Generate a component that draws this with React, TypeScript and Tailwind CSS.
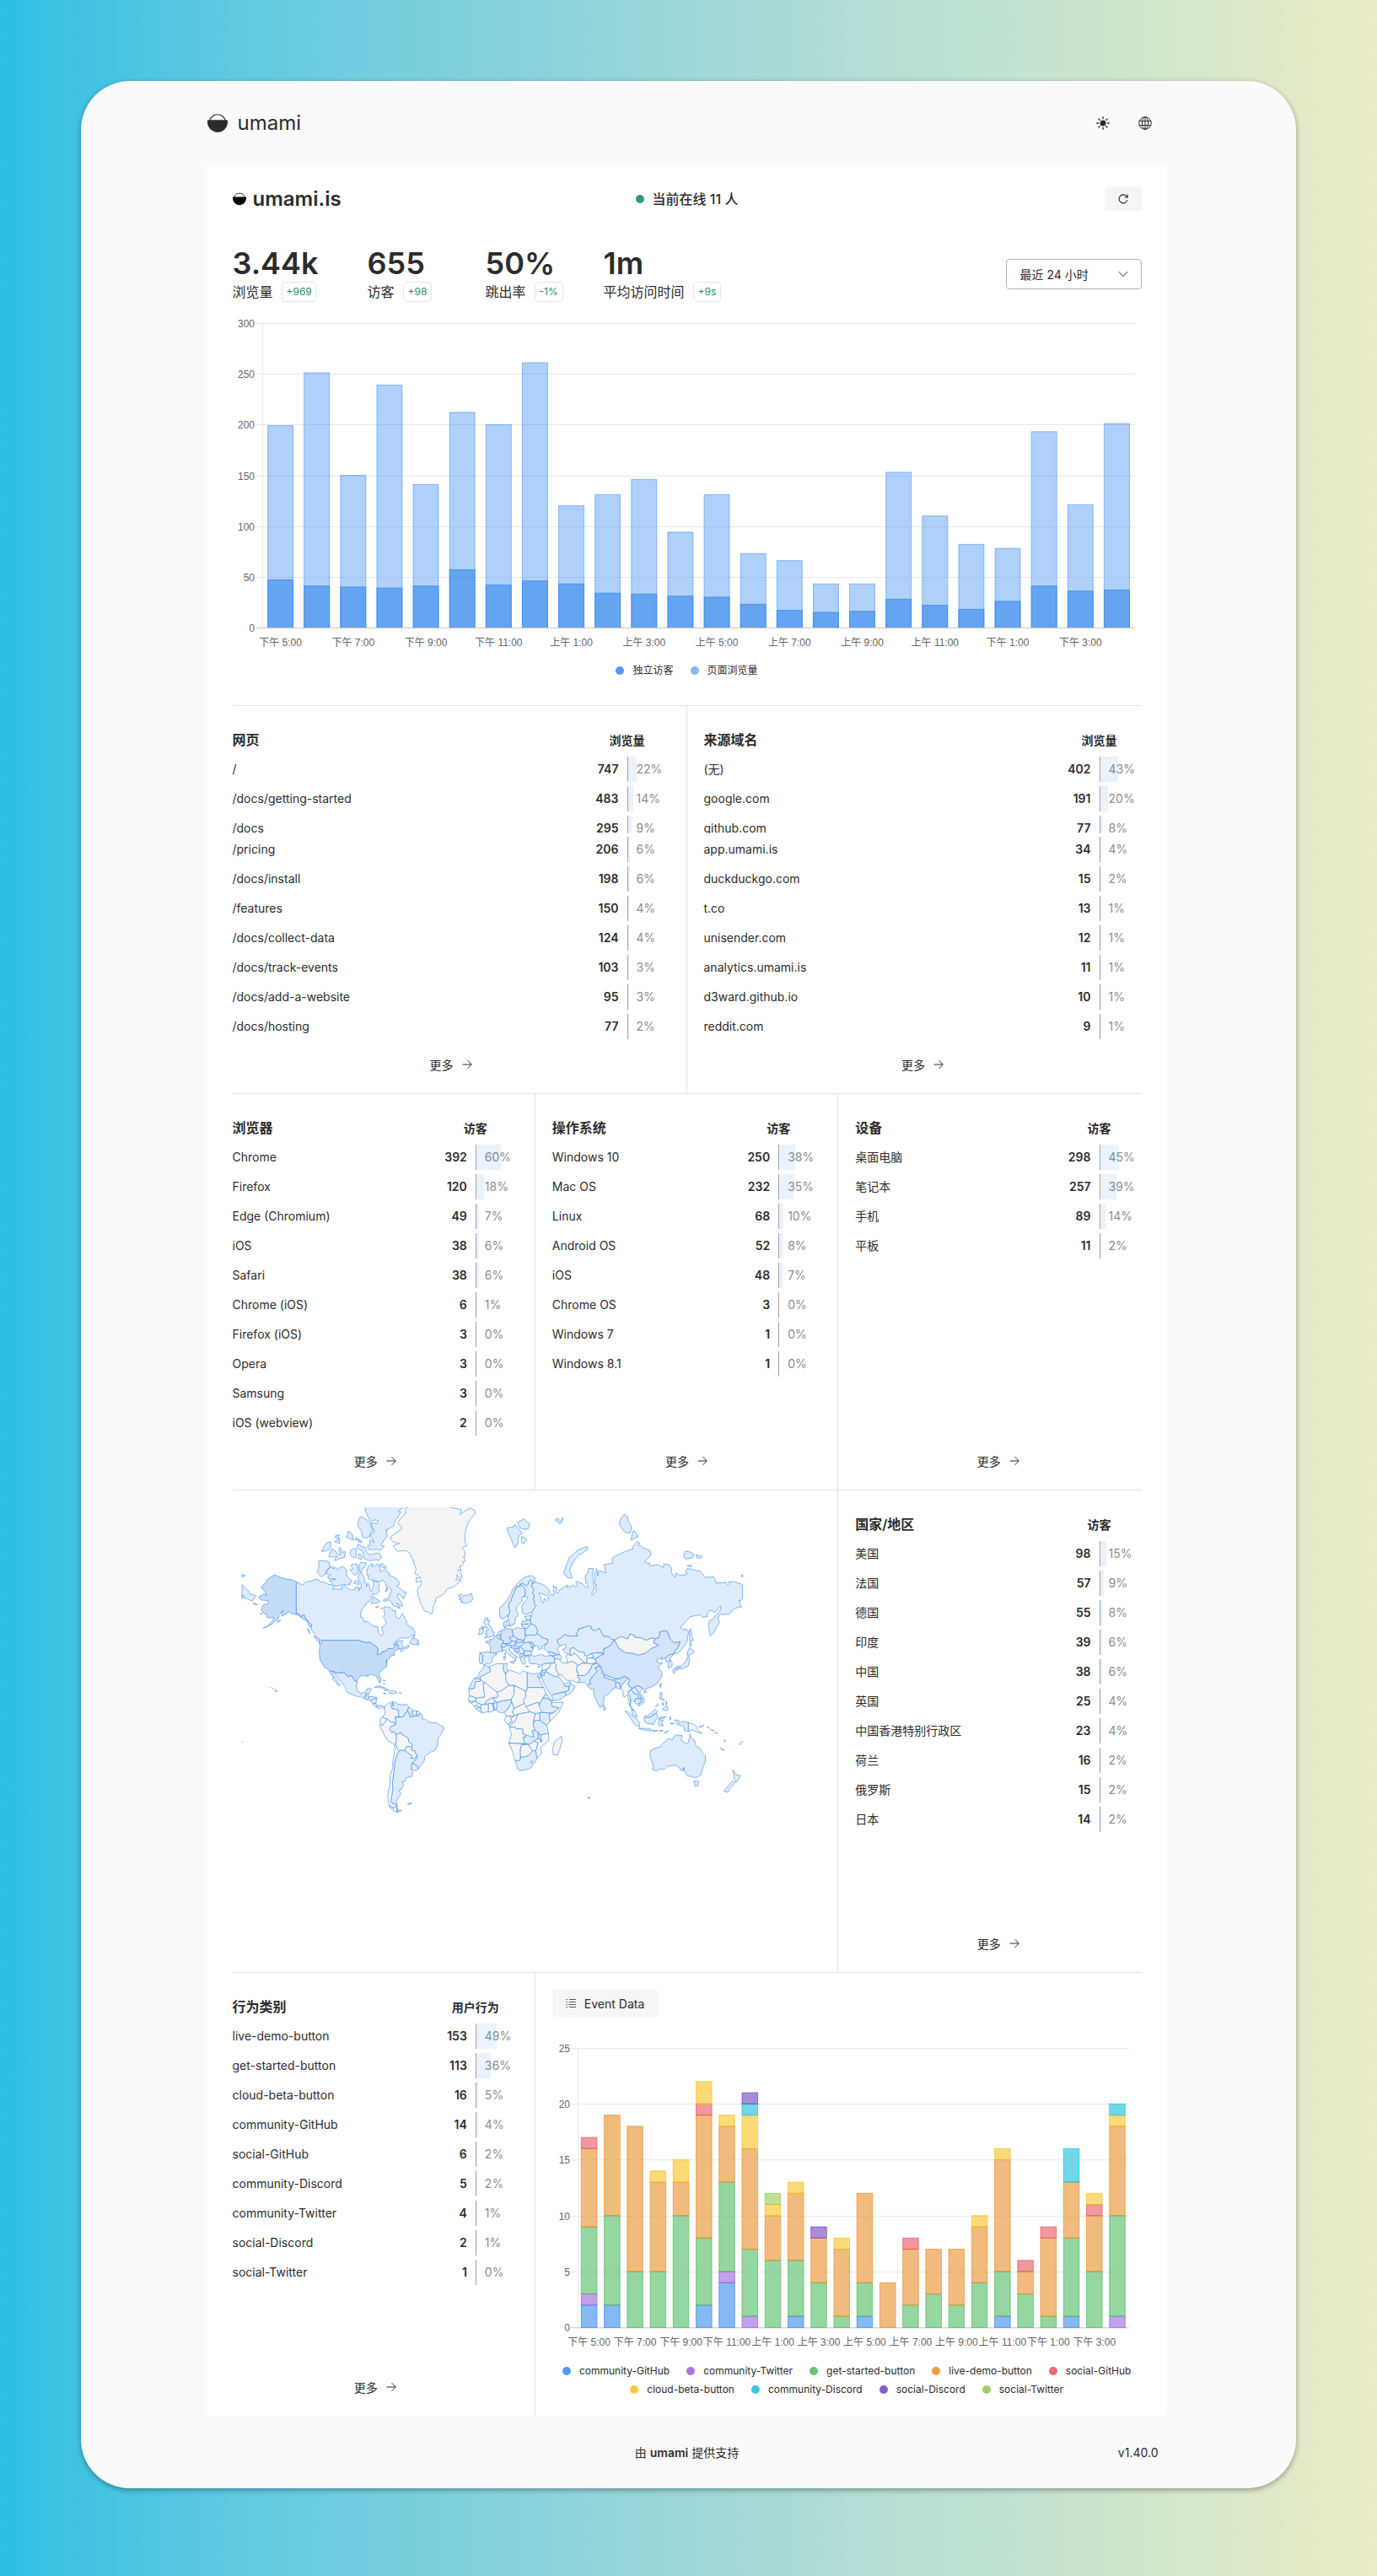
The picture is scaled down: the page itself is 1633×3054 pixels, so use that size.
import React from "react";

const INK = "#2c2c2c";

/* ---------- data ---------- */

type Row = [string, number, number];

const pages: Row[] = [
  ["/", 747, 22], ["/docs/getting-started", 483, 14], ["/docs", 295, 9], ["/pricing", 206, 6],
  ["/docs/install", 198, 6], ["/features", 150, 4], ["/docs/collect-data", 124, 4],
  ["/docs/track-events", 103, 3], ["/docs/add-a-website", 95, 3], ["/docs/hosting", 77, 2],
];
const referrers: Row[] = [
  ["(无)", 402, 43], ["google.com", 191, 20], ["github.com", 77, 8], ["app.umami.is", 34, 4],
  ["duckduckgo.com", 15, 2], ["t.co", 13, 1], ["unisender.com", 12, 1],
  ["analytics.umami.is", 11, 1], ["d3ward.github.io", 10, 1], ["reddit.com", 9, 1],
];
const browsers: Row[] = [
  ["Chrome", 392, 60], ["Firefox", 120, 18], ["Edge (Chromium)", 49, 7], ["iOS", 38, 6], ["Safari", 38, 6],
  ["Chrome (iOS)", 6, 1], ["Firefox (iOS)", 3, 0], ["Opera", 3, 0], ["Samsung", 3, 0], ["iOS (webview)", 2, 0],
];
const systems: Row[] = [
  ["Windows 10", 250, 38], ["Mac OS", 232, 35], ["Linux", 68, 10], ["Android OS", 52, 8], ["iOS", 48, 7],
  ["Chrome OS", 3, 0], ["Windows 7", 1, 0], ["Windows 8.1", 1, 0],
];
const devices: Row[] = [["桌面电脑", 298, 45], ["笔记本", 257, 39], ["手机", 89, 14], ["平板", 11, 2]];
const countries: Row[] = [
  ["美国", 98, 15], ["法国", 57, 9], ["德国", 55, 8], ["印度", 39, 6], ["中国", 38, 6], ["英国", 25, 4],
  ["中国香港特别行政区", 23, 4], ["荷兰", 16, 2], ["俄罗斯", 15, 2], ["日本", 14, 2],
];
const events: Row[] = [
  ["live-demo-button", 153, 49], ["get-started-button", 113, 36], ["cloud-beta-button", 16, 5],
  ["community-GitHub", 14, 4], ["social-GitHub", 6, 2], ["community-Discord", 5, 2],
  ["community-Twitter", 4, 1], ["social-Discord", 2, 1], ["social-Twitter", 1, 0],
];
const metrics: [string, string, string][] = [
  ["3.44k", "浏览量", "+969"], ["655", "访客", "+98"], ["50%", "跳出率", "-1%"], ["1m", "平均访问时间", "+9s"],
];

const hours = [
  "下午 5:00", "下午 7:00", "下午 9:00", "下午 11:00", "上午 1:00", "上午 3:00",
  "上午 5:00", "上午 7:00", "上午 9:00", "上午 11:00", "下午 1:00", "下午 3:00",
];
const views = [199, 251, 150, 239, 141, 212, 200, 261, 120, 131, 146, 94, 131, 73, 66, 43, 43, 153, 110, 82, 78, 193, 121, 201];
const visitors = [47, 41, 40, 39, 41, 57, 42, 46, 43, 34, 33, 31, 30, 23, 17, 15, 16, 28, 22, 18, 26, 41, 36, 37];

const series: [string, string][] = [
  ["community-GitHub", "#2680eb"], ["community-Twitter", "#9256d9"], ["get-started-button", "#44b556"],
  ["live-demo-button", "#e68619"], ["social-GitHub", "#e34850"], ["cloud-beta-button", "#f7bd12"],
  ["community-Discord", "#01bad7"], ["social-Discord", "#6734bc"], ["social-Twitter", "#89c541"],
];
// One entry per hour, counts in the order of `series`.
const eventBars = [
  [2, 1, 6, 7, 1], [2, 0, 8, 9], [0, 0, 5, 13], [0, 0, 5, 8, 0, 1], [0, 0, 10, 3, 0, 2], [2, 0, 6, 11, 1, 2],
  [4, 1, 8, 5, 0, 1], [0, 1, 6, 9, 0, 3, 1, 1], [0, 0, 6, 4, 0, 1, 0, 0, 1], [1, 0, 5, 6, 0, 1],
  [0, 0, 4, 4, 0, 0, 0, 1], [0, 0, 1, 6, 0, 1], [1, 0, 3, 8], [0, 0, 0, 4], [0, 0, 2, 5, 1], [0, 0, 3, 4],
  [0, 0, 2, 5], [0, 0, 4, 5, 0, 1], [1, 0, 4, 10, 0, 1], [0, 0, 3, 2, 1], [0, 0, 1, 7, 1],
  [1, 0, 7, 5, 0, 0, 3], [0, 0, 5, 5, 1, 1], [0, 1, 9, 8, 0, 1, 1],
];

/* ---------- world map, outlines as "lon,lat" lists ---------- */

const usa = [
  "-141,69.7 -141,60.3 -139,60 -137.5,59 -135.5,59.8 -134,58.2 -132,57 -130,55.9 -130.5,54.8 -132,55.5 -133.5,57.5 -136.5,58.3 -140,59.7 -144,60 -147,60.9 -148.3,60 -151.7,59.2 -151.5,60.7 -150,61.2 -153,60 -154,59.3 -153.3,58.9 -156,57.5 -158.5,56 -163,54.8 -164.8,54.5 -162,55.3 -158,57.5 -157,58.8 -159,58.5 -162,58.7 -162,59.9 -164,60 -165.5,61.1 -166,61.7 -164.8,63.1 -161,63.5 -161,64.5 -163.5,64.5 -166.5,64.7 -168,65.6 -164.5,66.5 -162,66.1 -163.7,67.1 -166.3,68.4 -163,69.5 -161.9,70.3 -156.6,71.4 -152.3,70.8 -148,70.4 -143.6,70.2",
  "-122.8,49 -95.2,49 -94.6,48.7 -91.6,48.1 -89.5,48 -88.4,48.3 -84.9,46.9 -84.6,46.5 -83.6,46.1 -83.6,45.8 -82.5,45.3 -82.1,43.6 -83.1,42 -82.4,41.7 -79,42.9 -79,43.5 -76.8,43.6 -76.5,44 -75,45 -71.5,45 -70.3,45.9 -69.2,47.4 -68.2,47.3 -67.8,47 -67.8,45.7 -67,44.8 -70.1,43.7 -70.8,42.5 -70,41.8 -72.3,41.3 -74,40.6 -74.2,39.5 -75.5,39 -76,37 -76.3,39 -76,36.5 -75.8,35.5 -78,33.9 -80.8,32 -81.4,30.7 -80,27 -80.4,25.2 -81.2,25.2 -82.7,27.7 -83.7,29.9 -85.1,29.6 -86.4,30.4 -89.6,30.2 -89.2,29.2 -91.6,29.6 -94,29.6 -97,28 -97.1,26 -99,26.4 -101,29.4 -102.5,29.8 -103.1,29 -104.5,29.6 -106.5,31.8 -108.2,31.8 -108.2,31.3 -111,31.3 -114.8,32.5 -117.1,32.5 -118.4,33.7 -120.6,34.6 -122,36.6 -124,39 -124.2,41 -124.5,42.8 -124,46 -124.6,48.3 -122.6,47.3",
  "-155.9,20.2 -154.8,19.5 -155.7,19 -156,19.8", "-156.6,20.9 -156,20.7 -156.4,20.6", "-158.2,21.6 -157.7,21.3 -158.1,21.3", "-159.7,22.2 -159.3,22 -159.6,21.9",
  "-154.7,57.6 -152.2,57.6 -154,56.7", "-166.5,60.3 -165.6,59.9 -167,59.9", "-171.7,63.7 -168.8,63.2 -171.5,63.3",
];

const strong = [
  // France, Germany
  "2.5,51.1 4.3,49.9 6.2,49.5 8.1,49 7.5,47.6 6,46.3 6.8,45.7 7.4,43.7 4.6,43.4 3.1,43.1 3,42.5 -1.5,43 -1.4,44 -1.2,46 -2.9,47.6 -4.5,48 -4.6,48.7 -1.6,48.6 -1.9,49.8 -1,49.3 1.3,50.1 1.6,50.9",
  "9.9,55 11,54 12.5,54.5 14.1,53.8 14.7,52 15,51.1 12.2,50.3 13.6,48.8 13,47.6 10.4,47.5 7.5,47.6 8.1,49 6.2,49.5 6,51.8 7.1,53.7 8.8,54 8.6,54.9",
  // India, China
  "77.8,35.5 74,34.5 75.3,32.3 74,31 71,27.9 70,26 71,24.4 68.2,23.7 70.5,20.9 72.6,21.5 73,18 74.8,13 77.5,8 80,10.3 80.3,15.9 82.2,16.6 87,20.7 87,21.5 89,21.8 88.6,24 88.5,26 89.8,25.3 92,25 91.2,23.5 92.3,22 93.2,24 94.6,25 97.3,28 95,29.3 91.7,27.8 88.8,27.5 88,26.4 80,28.8 81,30 79,31 79,32.5",
  "87.8,49.2 91,45.2 96,42.8 101,42.6 105,41.6 110,42.6 112,43.7 114,45 119.7,46.7 116,47.8 116.7,49.9 119.3,50.1 120.7,52 120.2,52.8 123.6,53.5 125.9,53 127.7,49.8 131,47.8 135,48.5 133.1,45.1 131.3,44.1 130.7,42.4 128,42 126.5,41.5 124.3,40 121.5,39 122,40.5 118,39 119,37.5 122.5,37.2 119.3,35 121.9,31.7 121.8,29 119.6,25.7 117,23.6 114,22.2 110.5,21.2 110,20.4 108,21.5 105,23.3 102,22.4 101,21.4 97.6,24 98.7,27.5 97.3,28.3 95,29.3 91.7,27.8 88,27.9 81,30.2 79,32.5 77.8,35.5 75,37.4 73.7,39.5 76,40.4 80.3,42.3 80,44.9 82.5,45.5 85.5,47",
  "110,20 111,19.5 109.5,18.2 108.7,19.3",
];

const light = [
  // Canada
  "-141,69.7 -136.5,68.9 -134.4,69.6 -131.4,69.9 -129,70 -127.5,70.4 -124.4,70.1 -123,69.6 -121.5,69.8 -117.6,69 -115.2,69 -113.9,68.4 -115,67.9 -110.8,67.8 -107.8,67.9 -108.8,68.3 -106.2,68.8 -104.3,68 -101.5,67.6 -98.4,67.8 -98.5,68.4 -96.1,68.2 -96,67.3 -95.5,68.1 -94.7,68.1 -94.2,69.1 -96.4,70.2 -96.4,71.2 -95.2,71.9 -93.9,71.8 -92.9,71.3 -91.5,70.2 -92.4,69.7 -90.5,69.5 -90.5,68.5 -89.2,69.3 -88,68.6 -88.3,67.9 -87.3,67.2 -86.3,67.9 -85.6,68.8 -85.5,69.9 -82.6,69.7 -81.3,69.2 -81.2,68.7 -82,68.1 -81.3,67.6 -81.4,67.1 -83.3,66.4 -84.7,66.3 -85.8,66.6 -86.1,66.1 -87,65.2 -87.3,64.8 -88.5,64.1 -89.9,64 -90.7,63.6 -90.8,63 -91.9,62.8 -93.2,62 -94.2,60.9 -94.6,60.1 -94.7,58.9 -93.2,58.8 -92.3,57.1 -90.9,57.3 -89,56.9 -88,56.5 -87.3,56 -85,55.3 -82.3,55.1 -82.4,54.3 -82.1,53.3 -81.4,52.2 -79.9,51.2 -79.1,51.5 -78.6,52.6 -79.1,54.1 -79.8,54.7 -78.2,55.1 -77.1,55.8 -76.5,56.5 -76.6,57.2 -77.3,58.1 -78.5,58.8 -77.3,59.9 -77.8,60.8 -78.1,62.3 -77.4,62.6 -75.7,62.3 -74.7,62.2 -73.8,62.4 -72.9,62.1 -71.7,61.5 -71.4,61.1 -69.6,61.1 -69.6,60.2 -69.3,59 -68.4,58.8 -67.6,58.2 -66.2,58.8 -65.2,59.9 -64.6,60.3 -63.8,59.4 -62.5,58.2 -61.4,57 -61.8,56.3 -60.5,55.8 -59.6,55.2 -58,54.9 -57.3,54.6 -56.9,53.8 -56.2,53.6 -55.8,53.3 -55.7,52.1 -57.1,51.4 -58.8,51.1 -60,50.2 -61.7,50.1 -66.4,50.2 -67.2,49.5 -68.5,49.1 -70,47.7 -71.1,46.8 -69,48.3 -65.1,49.2 -64.2,48.7 -65.1,48.1 -64.5,46.2 -63.2,45.7 -61.5,45.9 -60.5,47 -59.8,45.9 -61,45.3 -63.3,44.7 -65.4,43.5 -66.1,43.6 -66.2,44.5 -64.4,45.3 -67,45.1 -67.8,45.7 -67.8,47 -68.2,47.3 -69.2,47.4 -70.3,45.9 -71.5,45 -75,45 -76.5,44 -76.8,43.6 -79,43.5 -79,42.9 -82.4,41.7 -83.1,42 -82.1,43.6 -82.5,45.3 -83.6,45.8 -83.6,46.1 -84.6,46.5 -84.9,46.9 -88.4,48.3 -89.5,48 -91.6,48.1 -94.6,48.7 -95.2,49 -122.8,49 -125,50 -127.4,50.8 -127.9,52.3 -129.1,52.8 -130.5,54.3 -130,55.9 -132,57 -134,58.2 -135.5,59.8 -137.5,59 -139,60 -141,60.3",
  "-56.1,50.7 -56.8,49.8 -55.5,49.9 -53.5,49.2 -53.8,48.5 -53.1,48.7 -52.6,47.5 -53.1,46.7 -54.2,46.8 -54.2,47.8 -55.4,46.9 -56,47 -59.3,47.6 -59.4,47.9 -58.4,49.1 -57.4,50.7 -55.9,51.6",
  "-123.5,48.5 -125.7,48.8 -128.4,50.8 -126,50.4", "-133.2,54.2 -131.2,52.2 -132,54",
  "-61.9,66.9 -63.9,65 -66.7,66.4 -68,66.3 -68.1,65.7 -64.9,63.4 -64.7,62.6 -66.3,62.9 -68.8,63.7 -66.2,61.9 -71,62.9 -72.2,63.4 -71.9,63.7 -74.8,64.7 -77.7,64.2 -78.6,64.6 -73.9,65.5 -74.3,65.8 -73.9,66.3 -72.7,67.3 -72.9,67.7 -76.9,68.9 -76.2,69.1 -79,70.2 -79.5,69.9 -81.3,69.7 -84.9,70 -88.7,70.4 -89.5,70.8 -88.5,71.2 -89.9,71.2 -90.2,72.2 -89.4,73.1 -88.4,73.5 -85.8,73.8 -86.6,73.2 -84.8,73.3 -82.3,73.8 -80.6,72.7 -80.7,72.1 -78.8,72.4 -77.8,72.7 -74.2,71.8 -74.1,71.3 -71.2,70.9 -68.8,70.5 -67.9,70.1 -66.5,69.2 -68.8,68.7 -63,67",
  "-80.9,73.3 -76.3,72.8 -76.3,73.1 -78.1,73.7 -80.3,73.8",
  "-114.2,73.1 -114.7,72.7 -112.4,73 -111.1,72.5 -109.9,73 -108.4,73.1 -107.5,73.2 -106.5,73 -105.4,72.7 -104.5,71 -101,70 -101.1,69.6 -102.7,69.5 -102.1,69.1 -104.2,68.9 -107.1,69.1 -109,68.8 -113.3,68.5 -113.9,69 -115.2,69.3 -117.3,70 -112.4,70.4 -117.9,70.5 -118.4,70.9 -116.1,71.3 -119.4,71.6 -118.6,72.3 -117.9,72.7 -115.2,73.3",
  "-120.5,71.4 -123.1,70.9 -125.9,71.9 -124.8,73 -124.9,74.3 -121.5,74.4 -117.6,74.2 -116.5,73 -119.2,72.5",
  "-100.4,73.8 -99.2,73.6 -97.4,73.8 -96.5,72.6 -96.7,71.7 -98.4,71.3 -99.3,71.4 -102.5,72.5 -100.4,72.7 -101.5,73.4",
  "-93.2,72.8 -94.3,72 -95.4,72.1 -96,73.4 -94.5,74.1 -90.5,73.9 -92,73",
  "-96.7,77.2 -94.7,77.1 -93.6,76.8 -91.6,76.8 -90.7,76.4 -91,76.1 -89.8,75.8 -89.2,75.6 -86.4,75.5 -84.8,75.7 -82.8,75.8 -81.1,75.7 -80.1,75.3 -79.8,74.9 -80.5,74.7 -81.9,74.4 -83.2,74.6 -86.1,74.4 -88.2,74.4 -89.8,74.5 -92.4,74.8 -92.8,75.4 -92.9,75.9 -93.9,76.3 -96,76.4 -97.1,76.8",
  "-94.9,75.6 -93.6,75 -94.2,74.6 -96.8,74.9 -95.6,75.7", "-98.5,76.7 -97.7,76.5 -97.7,75.7 -98.2,75 -99.8,74.9 -102.5,75.6 -101.5,76.3",
  "-108.2,76.2 -107.8,75.8 -106.9,76 -105.9,76 -105.7,75.5 -106.3,75 -109.7,74.8 -112.2,74.4 -113.7,74.4 -111.8,75.2 -116.3,75 -117.7,75.2 -115.4,76.5 -112.6,76.1 -110.8,75.5 -109.1,75.5 -110.5,76.4 -109.6,76.8",
  "-116.2,77.6 -116.3,76.9 -117.1,76.5 -119.9,76.1 -122.9,76.1 -121.2,76.9 -119.1,77.5",
  "-87,79.7 -85.8,79.3 -87.2,79 -89,78.3 -90.8,78.2 -92.9,78.3 -94,78.8 -93.9,79.1 -96.1,79.7 -96.7,80.2 -95.3,80.9 -94.3,81 -91.1,80.7 -87.8,80.3",
  "-68.5,83.1 -65.8,83 -63.7,82.9 -61.9,82.6 -64.3,81.9 -66.8,81.7 -67.7,81.5 -65.5,81.5 -67.8,80.9 -69.5,80.6 -71.2,79.8 -73.2,79.6 -76.9,79.3 -75.5,79.2 -76.2,79 -75.4,78.5 -76.3,78.2 -77.9,77.9 -79.8,77.2 -79.6,77 -77.9,77 -77.9,76.8 -80.6,76.2 -83.2,76.5 -86.1,76.3 -89.5,76.5 -89.6,77 -87.8,77.2 -88.3,77.9 -87.7,78 -85,77.5 -86.3,78.2 -88,78.4 -87.2,78.8 -85.4,79 -85.1,79.3 -86.5,79.7 -86.9,80.3 -84.2,80.2 -83.4,80.1 -81.8,80.5 -84.1,80.6 -87.6,80.5 -89.4,80.9 -90.2,81.3 -91.4,81.6 -91.6,81.9 -90.1,82.1 -86,82.7",
  "-85.2,65.7 -84,65.2 -81.6,64.5 -80.8,64.1 -83.1,63.7 -85.5,63.7 -87.2,63.5 -86,64.6",
  "-104.2,78.7 -103.5,79.2 -100.8,78.8 -99.7,77.9 -101.3,78 -105.2,78.4", "-95.6,69.1 -97.6,69.1 -99.8,69.4 -98.2,70.1 -96.6,69.7",
  "-110,78 -110.9,78.4 -109.7,78.6 -112.5,78.6 -112.9,78.3", "-109.9,78 -113.5,77.7 -110,77.4", "-93.8,77.5 -96.4,77.6 -96.2,77.9 -94,77.8", "-98,78.3 -95.5,77.9 -98.5,77.9",
  "-75.9,68.3 -77,67.1 -75.1,67.5", "-82,62.8 -83.9,62.2 -81.9,62.5", "-79.3,62.3 -79.9,62 -79.7,61.7",
  // Iceland, Scandinavia, Svalbard
  "-14.5,66.5 -14.7,65.8 -13.6,65.1 -14.9,64.4 -17.8,63.7 -18.7,63.5 -22.8,64 -21.8,64.4 -24,64.9 -22.2,65.1 -22.2,65.4 -24.3,65.6 -23.7,66.3 -22.1,66.4 -20.6,65.7 -19.1,66.3 -17.8,66 -16.2,66.5",
  "5,62 5.7,58.6 7,58.1 8.4,58.3 10.4,59.5 11,59 12.3,60.1 12.6,61.3 12,61.8 11.9,63.1 12.6,64.1 13.9,64.4 13.6,64.8 15.1,66.2 16.1,67.3 16.8,68 17.7,68 17.9,68.6 20,68.4 20,69.1 20.6,69.1 21.2,69.4 23.7,68.9 24.7,68.6 25.7,69.1 26.2,69.8 28,70.1 29,69.8 28.6,69.1 31.1,69.6 30,70.2 31.3,70.5 28.2,71.2 24.5,71 21.4,70.3 19.2,69.8 16.4,68.6 14.8,67.8 12.4,65.9 10.5,64.5 8.6,63.5",
  "22.2,65.7 21.2,65 21.4,64.4 19.8,63.6 17.8,62.7 17.1,61.3 17.8,60.6 18.8,60.1 17.9,59 16.8,58.7 16.4,57 15.9,56.1 14.7,56.2 14.1,55.4 12.9,55.4 12.6,56.3 11.8,57.4 11,58.9 12.3,60.1 12.6,61.3 12,61.8 11.9,63.1 12.6,64.1 13.9,64.4 13.6,64.8 15.1,66.2 16.1,67.3 16.8,68 17.7,68 17.9,68.6 20,68.4 20,69.1 20.6,69.1 23.5,67.9 23.9,66",
  "28.6,69.1 28.4,68.4 30,67.7 29,66.9 30.2,65.8 29.5,64.9 30.4,64.2 30,63.6 31.5,62.9 28.1,60.5 22.9,59.8 21.3,60.7 21.5,61.7 21.1,62.6 22.4,63.8 25.4,65.1 25.3,65.5 22.2,65.7 23.9,66 23.5,67.9 20.6,69.1 21.2,69.4 23.7,68.9 24.7,68.6 25.7,69.1 26.2,69.8 28,70.1 29,69.8",
  "10.4,79.6 13,79.7 15,79.7 16,80 17,79.9 18,79.7 21.5,78.9 19,78.5 18.5,77.5 17,76.8 15.9,76.8 14.5,77.5 13.8,78 11.5,78.9", "18,80.3 20,80.5 22.9,80.7 27,80.1 25.9,79.5 23,79.4 20.1,79.6", "20.9,78.4 22.9,78.3 24.7,77.9 22.5,77.3 21,77.7",
  "45,80.6 47,80.8 49,80.5 51,80.9 50,80.3 48.5,80.1 47,80.4",
  "8.1,55.5 8.3,57 10.6,57.7 10.9,56.4 9.6,54.8 8.5,55", "12,56 12.6,55.5 11,55.4",
  // British Isles, Iberia
  "-3,58.6 -4.1,57.6 -1.9,57.7 -3.1,56 -2,55.8 -.4,54.5 .5,52.9 1.7,52.7 1,51.8 1.4,51.3 -2.5,50.5 -5.8,50.2 -3.4,51.4 -5.3,52 -4.2,52.3 -4.6,53.5 -3.1,53.4 -2.9,54 -3.6,54.6 -5,54.8 -4.7,55.6 -5.6,56.3 -6.1,56.8 -5,58.6",
  "-5.7,54.6 -7.6,54.1 -7.3,55.1 -6,55.2", "-6.2,53.9 -6,53.2 -6.8,52.3 -10,51.6 -9,53 -9.7,53.9 -7.3,55.1 -7.6,54.1",
  "-9,43 -1.9,43.4 3,42.5 3,41.9 .8,41 -.3,39.3 .1,38.7 -.7,37.6 -2.1,36.7 -4.4,36.7 -5.9,36 -7.5,37.1 -7,38 -7,39.7 -6.9,41 -6.4,41.4 -8.3,42.3 -9,41.9",
  "-9,41.9 -8.3,42.3 -6.4,41.4 -6.9,41 -7,39.7 -7,38 -7.5,37.1 -8.9,36.9 -9.5,38.7",
  // Central Europe, Italy, Balkans
  "3.5,51.4 4.7,53.1 6.9,53.5 7,52.2 6,51.8 6,50.9 5,51.5", "2.5,51.1 3.5,51.4 5,51.5 6,50.9 6.2,49.5 4.3,49.9",
  "6,46.3 7.5,47.6 9.6,47.4 10.4,46.8 9,45.9 6.8,45.9", "9.6,47.4 13,47.6 13.6,48.8 17,48.6 16.3,46.9 13.8,46.5 10.4,46.8",
  "7.4,43.7 6.8,45.7 9,45.9 10.4,46.8 13.8,46.5 13.6,45.6 12.3,45.2 12.6,44 14,42.7 16,41.9 18.4,40.3 16.9,40.5 16.5,39.8 17.1,39 15.8,38 16,39.5 15.2,40.1 12.2,41.8 10.3,43 8.8,44.4",
  "12.5,38 15.5,38.2 15.2,36.8", "8.3,40.9 9.6,41 9.2,39.2 8.4,39", "9.5,43 9.3,41.5 8.7,42",
  "14.1,53.8 18,54.8 19.7,54.4 22.8,54.4 23.8,53 23.5,51.5 24,50.6 22.6,49.1 18.9,49.5 15,51.1 14.7,52", "12.2,50.3 15,51.1 18.9,49.5 17,48.6 13.6,48.8",
  "17,48.6 18.9,49.5 22.6,49.1 22.1,48.4 18,47.8", "16.3,46.9 17,48 18,47.8 22.1,48.4 22.7,47.9 20.3,46.1 18.4,45.8 16.6,46.5",
  "22.7,47.9 26.6,48.2 28.2,46.9 28.2,45.5 29.6,45 28.6,43.7 22.9,43.9 21.4,45 20.3,46.1", "22.9,43.9 28.6,43.7 28,42 26.3,41.6 23,41.3",
  "20.3,46.1 22.9,43.9 22.4,42.3 20.5,42.2 19.2,43.5 19,45", "13.6,45.5 16.6,46.5 19,45.8 19,45 15.8,45.2 18.4,42.4 15.9,43.6 14.9,45", "15.8,45.2 19,44.9 19.2,43.5 18.6,42.7",
  "19.4,42 20.5,42.2 22.4,42.3 23,41.3 21,40.9 20,39.7", "20,39.7 21,40.9 23,41.3 26.3,41.6 26,40.9 23,40.3 22.8,39.5 24,38 23,36.5 21.5,36.9", "23.6,35.5 26.2,35.2 24.7,34.9", "32.4,35 34.5,35.6 33.6,34.8",
  "24,50.6 23.9,51.6 30.5,51.5 32,52.1 34.3,51.5 35,50.7 38,49.9 40,49.6 39.7,47.9 38.2,47.1 35,46.3 36.3,45.4 33.6,44.4 32.5,45.4 33.4,46 31,46.6 29.6,45.2 28.2,45.5 30,46.4 29,48 26.6,48.2 22.7,47.9 22.6,49.1", "26.6,48.2 29,48 30,46.4 28.2,45.5 28.2,46.9",
  "23.5,51.5 23.8,53 23.5,53.9 26.6,55.2 28.2,56.2 30.9,55.6 32.7,53.4 31.8,52.1 30.5,51.5", "21.1,55.2 21,56 25,56.3 26.6,55.2 23.5,53.9 22.7,54.9", "21,56 21.6,57.4 24.4,57.2 24.4,58 27.3,57.5 28.2,56.2 25,56.3", "24.4,58 23.4,59.2 28,59.5 27.3,57.5",
  // Russia
  "28,59.5 29,60 28.1,60.5 31.5,62.9 30,63.6 30.4,64.2 29.5,64.9 30.2,65.8 29,66.9 30,67.7 28.4,68.4 28.6,69.1 31.1,69.6 33.8,69.3 36.5,69.1 40.3,67.9 41.1,67.5 41.1,66.8 40,66.3 38.4,66 33.9,66.8 33.2,66.6 34.8,65.9 34.9,64.4 36.2,64.1 37,63.8 37.2,65.1 39.6,64.5 40.4,64.8 39.8,65.5 42.1,66.5 44,66.1 44.5,66.8 43.7,67.4 44.2,68 43.5,68.6 46.3,68.3 46.8,67.7 45.6,67 46.3,66.7 47.9,66.9 48.1,67.5 50.2,68 53.7,68.9 54.5,68.8 53.5,68.2 58.8,68.9 59.9,68.3 61.1,68.9 60,69.5 60.6,69.8 64.9,69.2 68.5,68.1 69.2,68.6 68.2,69.1 68.1,69.4 66.9,69.5 67.3,69.9 66.7,71 68.5,71.9 69.2,72.8 72.6,72.8 72.8,72.2 71.8,71.4 72.8,70.4 72.6,69 73.7,68.4 71.3,66.3 72.4,66.2 74.5,67.3 74.9,68 74.4,68.3 74.9,69 73.8,69.1 73.6,69.6 74.4,70.6 73.1,71.4 74.9,72.1 74.7,72.8 75.7,72.3 75.3,71.3 76.4,71.2 75.9,71.9 77.6,72.3 81.5,71.8 80.5,73.6 86.8,73.9 86,74.5 87.2,75.1 92.9,75.8 98.9,76.4 100.8,76.4 101,76.9 104.4,77.7 106.1,77.4 104.7,77.1 107,77 108.2,76.7 113.3,76.2 114.1,75.8 113.9,75.3 109.4,74.2 112.1,73.8 113,74 113.5,73.3 118.8,73.6 123.2,73 123.3,73.7 127,73.6 128.6,73 129,72.4 128.5,72 131.3,70.8 132.3,71.8 133.9,71.4 137.5,71.3 139.9,71.5 139.1,72.4 140.5,72.8 149.5,72.2 153,70.8 159,70.9 159.8,70.5 160.9,69.4 167.8,69.6 169.6,68.7 170.8,69 170,69.7 173.6,69.8 180,69 180,65 178.7,64.5 177.4,64.6 179.2,62.3 177.4,62.5 173.7,61.7 170.3,59.9 166.3,59.8 163.5,59.9 162,58.2 163.2,57.6 163,56.2 161.7,55.3 160,53.2 158.2,51.9 156.8,51 155.4,55.4 155.9,56.8 156.8,57.8 158.4,58.1 161.9,60.3 163.7,61.1 164.5,62.6 163.3,62.5 160.1,60.5 156.7,61.4 154.2,59.8 155,59.1 151.3,58.8 149.8,59.7 142.2,59 135.1,54.7 138.2,53.8 138.8,54.3 141.3,53.1 140.6,51.2 140,48.4 138.6,47 135.5,44 133.5,42.8 130.8,42.2 131.3,44.1 133.1,45.1 135,48.5 131,47.8 127.7,49.8 126.9,51.4 125.9,53 123.6,53.5 120.2,52.8 120.7,52 119.3,50.1 116.7,49.9 114.4,50.2 110.7,49.1 106.9,50.3 102.3,50.5 102.1,51.3 98.9,52 97.3,49.7 94.1,50.5 92.2,50.8 87.8,49.3 85.5,49.7 83.9,50.9 80,50.9 77.8,53.3 76.9,54.5 74.4,53.5 73.4,53.5 71.2,54.1 70.9,55.2 69,55.4 61.7,54 61.7,53 60,52 61.6,51.3 59.9,50.8 58.4,51.1 56.8,51 54.5,51 52.3,51.7 48.6,49.9 46.8,49.4 47.3,47.7 49.1,46.4 47.6,45.6 46.7,44.6 48.6,41.8 46.4,41.9 45.5,42.5 42.4,43.2 40,43.4 37,45 37.7,46.6 39.1,47.3 38.2,47.1 39.7,47.9 40,49.6 38,49.9 35,50.7 34.3,51.5 32,52.1 31.8,52.1 32.7,53.4 30.9,55.6 28.2,56.2 27.3,57.5",
  "57.5,70.7 56,70.6 53.7,70.8 53.4,71.2 51.6,71.5 51.5,72 55.6,75.1 58.5,75.6 61.2,76.3 68.2,76.9 68.9,76.5 64.6,75.7 61.6,75.3 58.5,74.3 55.4,72.4",
  "143.6,50.7 144.7,49 143.2,49.3 142.6,47.9 143.5,46.8 142.1,46 141.9,48.9 141.7,53.3 142.7,54.4",
  "95,81.2 97,81 98,80.4 100,79.8 99.5,79 97,78.9 95,79.1 92.5,79.7 91.3,80.2 93,80.9", "101.3,79.2 103,79.1 105,78.4 102.5,78.2 99.5,77.9",
  "138.8,76.1 141,76.1 145,75.6 144,74.9 139,74.7 137.5,75.2", "146.4,75.5 150.7,75.2 149.5,74.8 147,75", "140,73.4 143.6,73.4 142,73.2",
  "178.7,71.1 180,71.5 180,70.9", "-180,71.5 -177.6,71.2 -178.7,70.9 -180,70.9", "-180,69 -175,67.2 -174,66.4 -169.9,66 -172.5,64.4 -173,64.3 -176,65 -178.4,65.4 -178.7,66.1 -179.9,65.9 -179.4,65.4 -180,65",
  // Central and Western Asia
  "87.4,49.2 85.5,49.7 83.9,50.9 80,50.9 77.8,53.3 76.9,54.5 74.4,53.5 73.4,53.5 71.2,54.1 70.9,55.2 69,55.4 61.7,54 61.7,53 60,52 61.6,51.3 59.9,50.8 58.4,51.1 56.8,51 54.5,51 52.3,51.7 48.6,49.9 46.8,49.4 47.3,47.7 49.1,46.4 51,47 53,46.8 53,45.3 50.3,44.6 52.5,42.8 54.8,42 56,41.3 56,45 58.5,45.5 62,43.5 66,43 66.7,41.2 68,41 71,42.3 75,43 79,42.9 80.3,42.3 80,44.9 82.5,45.5 85.5,47",
  "71,42.3 75,43 80.3,42.3 76,40.4 73.7,39.5 69.5,39.5 73,40.8",
  "61.5,25.1 63.2,27.2 61,29.8 66.4,29.9 69,31.5 71,34 71.5,36 75,37.4 77,35.5 74,34.5 75.3,32.3 74,31 71,27.9 70,26 71,24.4 68,23.7 66.5,25.4",
  "88.5,26 89.8,25.3 92,25 92.3,21 89,21.8 88.6,24", "80,9.8 81.8,7.5 80.5,6 79.7,8",
  "26.2,40.3 28,42 29,41.2 31,41.1 35,42 38.3,41 41.5,41.5 43.5,41 44.8,39.7 44.8,37.2 42.3,37.2 36.7,36.8 36,36 34,36.3 30.6,36.8 27.3,36.8 26.3,38.3",
  "40,43.4 42.4,43.2 46.4,41.9 45,41.3 41.5,41.5", "45,41.3 46.4,41.9 48.6,41.8 50,40.4 48.9,38.4 46.5,38.8 44.8,39.7 43.5,41",
  "35.5,32.7 38.8,33.4 39,32 37,31.5 37.5,30 35,29.4", "34.3,31.2 35.7,33.2 35,29.4",
  "35,29.4 37.5,30 37,31.5 39,32 44.7,29.2 46.5,29.1 48.4,28.5 50.2,26.5 51.5,24.4 52,23 55.2,22.7 55,20 52,19 48,18.2 44,17.4 42.8,16.4 39,21.2 37,25",
  "42.8,16.4 44,17.4 48,18.2 52,19 53.1,16.6 49,14 43.5,12.7", "55,20 55.2,22.7 56,24.8 59.8,22.5 57.7,19.5 55.2,17.4 53.1,16.6 52,19", "51.5,24.4 56.3,26 56,24.8 55.2,22.7 52,23",
  // South-East and East Asia
  "100,20.4 97.4,18.5 98.9,16 99.2,13 98.5,10 100.1,6.5 102,6.2 100.3,8.3 99.2,10 100,13.4 102.5,12.2 103,14.2 105.5,14.5 104.5,17.4 102,18", "100,20.4 102,22.4 104,20.5 107,16 107,14.5 105.5,14.5 104.5,17.4 102,18",
  "102,22.4 105,23.3 108,21.5 106,19 109,15 109.3,12 105,8.8 105,10.5 107.5,12.4 107.5,14.5 104,20.5", "102.5,12.2 103,14.2 107.5,14.2 106,11 103.5,10.6",
  "121.5,25.2 120.8,22 120.1,23.5", "130.7,42.4 128,42 124.3,40 125,38 128.4,38.6 127.5,39.8", "126.7,37.8 128.4,38.6 129.4,37 129.2,35.2 126.5,34.4 126.5,36.7",
  "141.9,39.2 140.9,35.7 138,34.6 135.8,33.5 135,34.6 131,33.9 132.6,35.4 135.7,35.5 137.3,36.8 139.4,38.2 140,40.5 141.3,41.4", "144.6,44 145.3,43.3 143.2,42 140,41.5 140.3,43.3 141.9,45.5", "131,33.9 131.8,32.7 130.6,31 129.5,33", "134.6,34.2 132.9,32.8 132.4,33.5",
  "120.7,18.5 122.2,18.4 121.6,15.9 124,13 122.5,13.6 120.6,14", "125.4,9.7 126.4,7 125.5,5.8 122,7 124,8.5", "122,11.8 123.5,10.9 122.7,9.5", "119.5,11 117.3,8.4 118.8,10", "125,12.5 125.7,11 124.8,10.2",
  "100.1,6.5 102,6.2 103.4,4 104.2,1.3 101,2.8", "109.6,2 111.4,2.7 113,3.2 115,5 117,7 119,5 117.9,4.2 115.5,3 114,1.4 110.5,.9", "109.6,2 110.5,.9 114,1.4 117.9,4.2 119,.9 117.5,-.8 116,-4 110.2,-2.9 109,.3",
  "95.3,5.5 97.5,5.2 100.6,2.1 103.8,.1 106,-3 105.8,-5.9 102.2,-4 98.7,1.7", "105.3,-6.8 108.6,-6.8 112.6,-6.9 114.5,-7.8 114,-8.7 108.3,-7.8",
  "119.8,.2 120.8,1.3 125,1.4 123,.5 120.2,.2 121,-.9 123.3,-.8 121.5,-2 123,-5 121.5,-4.5 120.4,-5.5 119.4,-3.5", "123.5,-10.3 127,-8.4 125,-9.3", "119.8,-8.5 122.8,-8.3 120.5,-9", "115,-8.3 119,-8.3 117,-9", "127.6,1.5 128.5,1 128,-.8", "128,-3.2 130.8,-3.5 129,-3",
  // Oceania
  "131,-.8 134,-.9 134.4,-3 137.9,-1.5 141,-2.6 141,-9.1 138,-8.4 138,-5.5 133,-4 132.7,-2.8",
  "114,-22 117,-20.6 121,-19.6 122.3,-17.5 124,-16.2 126.8,-14 129.5,-14.9 130.8,-12.4 132.7,-11.4 136.7,-12 135.5,-15 139.5,-17.5 141,-16.5 142.2,-10.9 143.6,-14 145.4,-15 146.3,-18.9 149,-20.4 150.8,-23.3 153.2,-25.9 153.2,-29 151.2,-33.5 150,-37.3 146.3,-39 144,-38.3 140.5,-38 138.5,-35.6 137.9,-33 136.9,-35.2 137.8,-33 135.7,-34.9 134.2,-32.7 131.1,-31.5 126,-32.3 123.7,-33.9 119.9,-34 118,-35 115,-34.2 115.8,-32 113.6,-26.5 113.4,-24.4",
  "144.8,-40.8 148.3,-40.9 148,-43.2 146,-43.6", "173,-34.5 175,-37 178.5,-37.7 176.8,-40 175,-41.6 174,-39.4", "172.7,-40.6 174.2,-41.8 171,-44.5 169.3,-46.6 166.6,-46 170,-43",
  "148.5,-5.6 152,-4.3 150,-6.2", "154.6,-5.5 156,-6.7 155,-6.5", "157,-7.5 159.5,-8.5 158,-8.3", "160,-9.3 162,-10.5 160.6,-9.9", "164,-20.2 167,-22.3 165.5,-21.8", "166.8,-14.8 167.5,-16.4 166.9,-15.7", "177.3,-18 178.5,-17.6 178,-18.2", "178.8,-16.8 180,-16.1 179.4,-16.7", "-180,-16.1 -179.7,-16.5 -180,-16.6", "69,-48.8 70.3,-49.3 69,-49.6",
  // Central America and Caribbean
  "-117.1,32.5 -116,30.4 -114.2,28.6 -115.1,27.8 -114.5,27.1 -112.2,25.5 -112.2,24.7 -110.3,23.4 -109.4,23.4 -110.2,24.3 -111.6,26.7 -112.8,27.8 -114.7,30.2 -114.8,31.8 -113.1,31.2 -112.3,29 -109.4,26.4 -108.4,25.2 -105.7,22.3 -105.4,20.4 -103.9,18.7 -101.7,17.6 -96.6,15.7 -94.7,16.2 -92.2,14.5 -91.5,16.1 -90.5,16.1 -91,17.3 -91,17.8 -89.1,17.8 -88.3,18.5 -87.5,20 -86.8,21.3 -90.3,21 -90.8,19.3 -91.4,18.9 -94.4,18.1 -95.9,18.8 -97.2,20.6 -97.9,22.4 -97.1,26 -99,26.4 -101,29.4 -102.5,29.8 -103.1,29 -104.5,29.6 -106.5,31.8 -108.2,31.8 -108.2,31.3 -111,31.3 -114.8,32.5",
  "-92.2,14.5 -90.1,13.7 -89.4,14.4 -88.2,15.7 -89.2,15.9 -89.1,17.8 -91,17.8 -91,17.3 -90.5,16.1 -91.5,16.1", "-90.1,13.7 -87.8,13.4 -87.3,13 -86,13.8 -83.1,15 -86,15.9 -88.2,15.7 -89.4,14.4", "-87.6,12.9 -86,11 -83.7,10.9 -83.1,15 -86,13.8", "-86,11 -85.8,10 -83,8.2 -82.6,9.6 -83.7,10.9", "-83,8.2 -80.9,7.2 -79.5,8.9 -78,7.4 -77.4,8.7 -79.5,9.6 -82.6,9.6",
  "-84.9,21.9 -83,23.1 -80.6,23.1 -77,21.7 -74.2,20.2 -77.7,19.9 -77,20.6 -78.5,21.6 -81.8,22.2", "-74.4,18.4 -71.4,17.7 -68.4,18.6 -70,19.8 -73,19.9", "-78.3,18.3 -76.3,18 -77.6,17.9", "-67.2,18.4 -65.6,18.3 -66,18", "-78.2,25.1 -77.5,24 -78,24.5", "-78.5,26.8 -77,26.6 -77.9,26.6",
  // South America
  "-71.4,12.4 -71.9,11.4 -71.3,9.1 -71.3,11 -70.2,12.2 -68.2,10.6 -65,10.1 -61.9,10.7 -60.8,9.4 -59.8,8.4 -61.4,6 -60.7,5.2 -62.8,4 -63.4,2.2 -64.2,1.5 -66.9,1.3 -67.4,2.2 -67.3,3.3 -67.9,4.5 -67.3,6.1 -67.7,6.3 -70.1,7 -72.1,7.3 -72.4,8.4 -73.3,9.2 -72.2,11.1",
  "-59.8,8.4 -58.5,7.3 -57.1,6 -58,4.1 -56.5,1.9 -59,1.3 -60,4.6 -60.7,5.2 -61.4,6", "-57.1,6 -54,5.8 -54.5,2.3 -56.5,1.9 -58,4.1", "-54,5.8 -51.7,4.2 -52.9,2.1 -54.5,2.3",
  "-51.7,4.2 -50,1.7 -50.4,0 -48.6,-.2 -44.6,-2.7 -39.9,-2.9 -37.2,-4.8 -35.2,-5.5 -34.7,-7.3 -37,-11 -39,-13.8 -39.2,-17.9 -40.9,-21.9 -44.6,-23.4 -48.5,-25.9 -48.9,-28.7 -50.7,-31 -53.4,-33.8 -53.8,-32 -57.6,-30.2 -53.6,-26.9 -54.6,-25.6 -54.3,-24.6 -55.4,-24 -55.8,-22.4 -57.9,-22.1 -58.2,-20.2 -57.5,-18.2 -60.2,-16.3 -60.5,-13.8 -65.3,-10.9 -65.3,-9.8 -68.3,-11 -70.5,-11 -70.5,-9.5 -72.7,-9.5 -74,-7.3 -72.9,-5.3 -69.9,-4.3 -69.4,-1.1 -70,.5 -69.2,.6 -69.8,1.7 -66.9,1.3 -64.2,1.5 -63.4,2.2 -62.8,4 -60.7,5.2 -60,4.6 -59,1.3 -56.5,1.9 -54.5,2.3 -52.9,2.1",
  "-57.6,-30.2 -53.8,-32 -53.4,-33.8 -54.9,-35 -58.4,-33.9 -58.1,-32",
  "-62.7,-22.2 -57.6,-25.6 -58.6,-27.1 -55.7,-27.4 -54.6,-25.6 -53.6,-26.9 -57.6,-30.2 -58.1,-32 -58.4,-33.9 -57.2,-35.5 -57.7,-38.2 -62.1,-38.9 -62.7,-41 -65.1,-41.1 -63.8,-42.5 -65.3,-45 -67.3,-45.6 -65.6,-47.2 -69.1,-50.7 -68.6,-52.3 -72,-51.8 -73,-50.5 -72.3,-48.2 -71.6,-45 -71.9,-42 -71,-36.7 -70.3,-33 -70.5,-31 -69.5,-28 -68.4,-24.5 -67.1,-22.7 -66.3,-21.8",
  "-68.6,-52.6 -68.6,-54.8 -66,-54.7 -65.2,-54.9 -68,-55.6", "-61,-51.9 -57.8,-51.5 -59.5,-52.3",
  // Africa
  "-6,35.8 -2.2,35.1 -1.2,32.3 -8.7,28.8 -8.7,27.7 -13,27.8 -9.8,29.6 -9.6,31.5 -6.9,34", "-13,27.8 -8.7,27.7 -8.7,26 -12,26 -13,21.3 -17,21 -14.8,25.6", "8.4,36.9 11,37 10,34.2 11.5,33.2 9.5,30.3 7.6,34",
  "25,31.6 29,30.9 34.2,31.2 34.9,29.4 34.3,27.8 32.4,29.8 35.7,23.9 36.9,22 25,22", "3.6,11.7 7,13 13.5,13.7 14,12 11,6.8 8.5,4.8 6,4.3 2.7,6.3",
  "36.3,14.8 40,14.5 42.4,12.5 43,9 48,8 45,5 42,4.2 36,4.6 33,8 34,10.5", "38.5,18 43.1,12.6 40,14.5 36.3,14.8", "34,4.3 36,4.6 42,4.2 41,3 41.5,-1.7 39.2,-4.7 34,-1",
  "30.5,-1 34,-1 39.2,-4.7 40.4,-10.4 34.5,-11.5 30.7,-8.3 29.4,-4.5", "24,-11 29.8,-13 28.5,-8.5 30.7,-8.3 33,-9.6 33,-14 30,-15.6 27,-18 23.2,-17.5 22,-13 24,-13", "33,-9.6 34.5,-11.5 35.8,-16 34.4,-16.5 34.5,-14.5 33,-14",
  "16.4,-28.6 20,-28.5 20,-24.8 20.7,-26.8 25.5,-25.7 29,-22.2 31.3,-22.3 32,-26.8 32.8,-26.8 28.2,-32.8 25.7,-34 20,-34.8 18.3,-34", "28,-29 29.3,-29.3 28,-30.5 27.2,-29.7",
];

const blank = [
  // Greenland
  "-46.8,82.6 -43.4,83.2 -35,83.6 -27,83.5 -20.8,82.7 -22.7,82.3 -26.5,82.3 -31.4,82 -24.8,81.8 -22,81.7 -23.2,81.2 -20.6,81.5 -15.8,81.9 -12.8,81.7 -12.2,81.3 -16.3,80.6 -17.7,80.1 -19,79.4 -19.7,78.8 -19.6,77.6 -18.5,77 -20,76.9 -21.7,76.6 -19.8,76.1 -19.4,75.2 -20.7,75.2 -19.4,74.3 -21.6,74.2 -20.4,73.8 -22.2,73.3 -23.6,73.3 -22.3,72.2 -24.3,72.6 -24.8,72.3 -22.1,71.5 -21.8,70.7 -23.5,70.5 -25.5,71.4 -25.2,70.8 -26.4,70.2 -23.7,70.2 -22.3,70.1 -25,69.3 -27.7,68.5 -30.7,68.1 -31.8,68.1 -32.8,67.7 -34.2,66.7 -36.4,66 -37,65.9 -39.8,65.5 -40.7,64.8 -41.2,63.5 -42.8,62.7 -42.4,61.9 -43.4,60.1 -44.8,60 -46.3,60.9 -48.3,60.9 -49.2,61.4 -49.9,62.4 -51.6,63.6 -52.1,64.3 -52.3,65.2 -53.7,66.1 -53.3,66.8 -54,67.2 -53,68.4 -51.5,68.7 -51.1,69.1 -50.9,69.9 -54.7,69.6 -54.7,70.8 -51.4,70.6 -54,71.5 -55,71.4 -55.8,71.7 -54.7,72.6 -55.3,73 -57.3,74.7 -58.6,75.1 -58.6,75.5 -61.3,76.1 -63.4,76.2 -68.5,76.1 -71.4,77 -66.8,77.4 -71,77.6 -73.3,78 -73.2,78.4 -65.7,79.4 -65.3,79.8 -68,80.1 -67.2,80.5 -63.7,81.2 -62.2,81.3 -62.7,81.8 -60.3,82 -57.2,82.2",
  // South America
  "-77.4,8.7 -75.6,10.6 -74.9,11.1 -71.4,12.4 -72.2,11.1 -73.3,9.2 -72.4,8.4 -72.1,7.3 -70.1,7 -67.7,6.3 -67.3,6.1 -67.9,4.5 -67.3,3.3 -67.4,2.2 -66.9,1.3 -69.8,1.7 -69.2,.6 -70,.5 -69.4,-1.1 -69.9,-4.3 -70.8,-2.2 -73.1,-2.3 -75.4,-.1 -77.4,.4 -78.9,1.4 -77.1,3.8 -77.5,6.7",
  "-78.9,1.4 -80.1,.8 -81,-2.2 -79.8,-2.7 -80.3,-3.4 -79.2,-5 -77.8,-3 -75.4,-.1 -77.4,.4",
  "-80.3,-3.4 -81.3,-4.7 -79.8,-7.2 -76,-14.6 -70.4,-18.3 -69.6,-17.6 -69,-16.2 -68.9,-12.5 -69.5,-11 -70.5,-9.5 -72.7,-9.5 -74,-7.3 -72.9,-5.3 -69.9,-4.3 -70.8,-2.2 -73.1,-2.3 -75.4,-.1 -77.8,-3 -79.2,-5",
  "-69.5,-11 -68.3,-11 -65.3,-9.8 -65.3,-10.9 -60.5,-13.8 -60.2,-16.3 -57.5,-18.2 -58.2,-20.2 -59.1,-19.4 -61.8,-19.6 -62.7,-22.2 -66.3,-21.8 -67.1,-22.7 -68.2,-21.5 -69.6,-17.6 -69,-16.2 -68.9,-12.5",
  "-58.2,-20.2 -57.9,-22.1 -55.8,-22.4 -55.4,-24 -54.3,-24.6 -54.6,-25.6 -55.7,-27.4 -58.6,-27.1 -57.6,-25.6 -62.7,-22.2 -61.8,-19.6 -59.1,-19.4",
  "-70.4,-18.3 -70.2,-22 -71.5,-29 -71.6,-33.5 -73.5,-37.2 -73.7,-40 -73.7,-43 -75,-46.7 -75.2,-50 -74,-52.5 -71,-53.8 -68.6,-52.3 -72,-51.8 -73,-50.5 -72.3,-48.2 -71.6,-45 -71.9,-42 -71,-36.7 -70.3,-33 -70.5,-31 -69.5,-28 -68.4,-24.5 -67.1,-22.7 -68.2,-21.5 -69.6,-17.6",
  "-68.6,-52.6 -68.6,-54.8 -68,-55.6 -71,-55 -74.7,-52.8 -71,-54",
  // Asia
  "87.8,49.2 92.2,50.8 94.1,50.5 97.3,49.7 98.9,52 102.1,51.3 102.3,50.5 106.9,50.3 110.7,49.1 114.4,50.2 116.7,49.9 116,47.8 119.7,46.7 114,45 112,43.7 110,42.6 105,41.6 101,42.6 96,42.8 91,45.2",
  "56,45 58.5,45.5 62,43.5 66,43 66.7,41.2 68.3,41.1 71,42.3 73,40.8 71,40.2 68,40 68,38.5 67.8,37.1 66.5,37.4 64,39 60,42.2 58.6,42.7 57,41.3 56,41.3",
  "52.8,41.2 54.8,42 57,41.3 58.6,42.7 60,42.2 64,39 66.5,37.4 64.8,37.1 61.2,35.6 61,36.6 57.3,38.2 53.9,37.3 53.9,39", "68,40 71,40.2 73.7,39.5 75,37.4 71.5,36.7 67.8,37.1",
  "44.8,39.7 48,39.6 48.9,38.4 50,37.4 53.9,37.3 57.3,38.2 61,36.6 61.2,35.6 60.5,34 61,31.5 61.8,31 61.7,28 63.2,27.2 61.5,25.1 57,26.8 54,26.6 51,28.8 50,30.2 48,30 46,33 45.5,35 46,36 44.8,37.2",
  "61.2,35.6 64.8,37.1 67.8,37.1 71.5,36.7 75,37.4 71.5,36 71,34 69.5,33.3 69,31.5 66.4,29.9 61,29.8 61.8,31 60.5,34", "80,28.8 81,30.2 88,27.9 88,26.4",
  "92.3,21 93.2,24 94.6,25 97.3,28.3 98.7,27.5 97.6,24 99,22 101,21.4 98,19.7 97.4,18.5 98.9,16 99.6,12 98.5,10 98,14 97,17 95.4,15.7 94.2,16 94,19",
  "36,36 36.7,36.8 42.3,37.2 41,34.4 38.8,33.4 35.7,32.7", "42.3,37.2 44.8,37.2 46,36 45.5,34 48,30 46.5,29.1 44.7,29.2 39,32 38.8,33.4 41,34.4",
  "141,-2.6 144.5,-3.8 147.6,-6 147.2,-7.5 150.8,-10.3 147,-9.5 144,-7.8 141,-9.1",
  // Africa
  "-2.2,35.1 3,36.8 8.4,36.9 7.6,34 9.5,30.3 9.9,26.5 12,23.5 5.8,19.5 3.2,19 -8.7,27.3 -8.7,28.8 -1.2,32.3", "11.5,33.2 15.3,32.3 20,30.8 22,32.8 25,31.6 25,20 23.9,19.6 15.9,23.4 12,23.5 9.9,26.5 9.5,30.3",
  "25,22 36.9,22 38.5,18 36.3,14.8 34,10.5 33,12 24,8.7 22,11 22.5,14 23.9,15.6 23.9,19.6 25,20", "-17,21 -13,21.3 -12,26 -8.7,26 -8.7,27.3 -4.9,25 -6.5,24.9 -5.5,15.5 -12,14.8 -16.3,16.5",
  "-4.9,25 3.2,19 4.2,16.5 3.6,15.4 0,15 -4,13 -5.5,10.5 -8,10.2 -12,12.3 -12,14.8 -5.5,15.5 -6.5,24.9", "3.2,19 5.8,19.5 12,23.5 15.9,23 15.5,17 13.5,13.7 7,13 3.6,11.7 .4,14.5 3.6,15.4 4.2,16.5",
  "15.9,23.4 23.9,19.6 23.9,15.6 22.5,14 22.9,11 18.8,9 15.5,7.5 14,12 13.5,13.7 15.5,17",
  "1,11 3.6,11.7 2.7,6.3 1.6,6.2", "0,11 1,11 1.6,6.2 1,6", "-2.8,11 0,11 1,6 -2,4.8 -3,5.1", "-5.5,10.5 -4,13 0,15 2.2,12.3 0,11 -2.8,11", "-8,10.2 -5.5,10.5 -2.8,9.8 -3,5.1 -7.5,4.4 -8.5,7.5", "-7.5,4.4 -11.4,6.8 -10,8.4 -8.5,7.5", "-11.4,6.8 -13,9 -11,10 -10,8.4", "-13,9 -15,11 -13.7,12.6 -12,12.3 -8,10.2 -8.5,7.5 -11,10", "-17,14.8 -16.3,16.5 -12,14.8 -12,12.3 -16.7,12.4", "-16.7,12.4 -13.7,12.6 -15,11",
  "14,12 15.5,7.5 14.5,5 16,2 9.8,2.2 8.5,4.8 11,6.8", "15.5,7.5 18.8,9 22.9,11 27.4,5 18.5,3.5 16,2 14.5,5", "24,8.7 33,12 34,8 36,4.6 31,3.8 27.4,5", "42.4,11.5 51,12 48,5 41.5,-1.7 41,3 45,5 48,8 43,9", "31,3.8 34,4.3 34,-1 29.6,-1.3",
  "18.5,3.5 27.4,5 31,3.8 29.6,-1.3 29.4,-4.5 30.7,-8.3 28.5,-8.5 29.8,-13 22,-11 21.8,-7.3 17,-7 16.5,-5.9 12.3,-6 13,-4.5 16,-2", "16,2 18.5,3.5 16.2,-2 13,-4.8 11,-3.9 14.3,-2 13,1", "9.8,2.2 13,2 13,1 14.3,-2 11,-3.9 8.8,-1",
  "12.3,-6 16.5,-5.9 17,-7 21.8,-7.3 22,-11 24,-11 24,-13 22,-13 23.2,-17.5 11.8,-17.2 13.7,-11",
  "34.5,-11.5 40.4,-10.4 40.6,-15.5 34.8,-20 35.5,-24 32.8,-26.8 32,-26.8 31.3,-22.3 32.8,-17 30,-15.6 33,-14 34.5,-14.5 34.4,-16.5 35.8,-16",
  "27,-18 30,-15.6 32.8,-17 31.3,-22.3 29,-22.2 25.3,-17.8", "20,-22 20.9,-18.3 25.3,-17.8 29,-22.2 25.5,-25.7 20.7,-26.8 20,-24.8", "11.8,-17.2 25.3,-17.8 20.9,-18.3 20,-22 20,-28.5 16.4,-28.6 14.4,-22.6", "49.5,-12.4 50.4,-15.5 47,-25 44,-25 43.4,-22 44.4,-16.5",
];

// Mercator projection of a "lon,lat" list into an SVG path.
function outline(ring: string) {
  const pts = ring.split(" ").map((p) => {
    const [lon, lat] = p.split(",").map(Number);
    const x = 11 + (lon + 180) * 1.65;
    const y = 251 - 94.5 * Math.log(Math.tan(Math.PI / 4 + (lat * Math.PI) / 360));
    return `${x.toFixed(1)} ${y.toFixed(1)}`;
  });
  return `M${pts.join("L")}Z`;
}

function WorldMap() {
  const groups: [string[], string][] = [[light, "#deebfc"], [blank, "#f4f4f4"], [strong, "#d3e4fb"], [usa, "#c5dcf8"]];
  return (
    <svg viewBox="0 0 718 380" className="block w-full" role="img" aria-label="世界地图">
      {groups.map(([rings, fill]) => (
        <g key={fill} fill={fill} stroke="#2680eb" strokeOpacity="0.55" strokeWidth="1" strokeLinejoin="round">
          {rings.map((r, i) => <path key={i} d={outline(r)} />)}
        </g>
      ))}
    </svg>
  );
}

/* ---------- charts ---------- */

type Frame = { left: number; right: number; top: number; bottom: number; ticks: number[] };

function Axes({ left, right, top, bottom, ticks }: Frame) {
  const max = ticks[ticks.length - 1];
  const step = (right - left) / 24;
  return (
    <g>
      {ticks.map((t) => {
        const y = Math.round(bottom - ((bottom - top) * t) / max) + 0.5;
        return (
          <g key={t}>
            <line x1={left - 8} x2={right} y1={y} y2={y} stroke={t === 0 ? "#c4c4c4" : "#e9e9e9"} />
            <text x={left - 9} y={y + 4} textAnchor="end">{t}</text>
          </g>
        );
      })}
      <line x1={left + 0.5} x2={left + 0.5} y1={top} y2={bottom} stroke="#e9e9e9" />
      {hours.map((h, i) => (
        <text key={h} x={left + step * (2 * i + 0.5)} y={bottom + 22} textAnchor="middle">{h}</text>
      ))}
    </g>
  );
}

const chartText = "block w-full fill-[#666] text-[12px] font-['Liberation_Sans','Noto_Sans_CJK_SC',sans-serif]";

function TrafficChart() {
  const f: Frame = { left: 35, right: 1070, top: 13, bottom: 374, ticks: [0, 50, 100, 150, 200, 250, 300] };
  const step = (f.right - f.left) / 24;
  const bar = (v: number, i: number, fill: number, edge: number) => {
    const h = ((f.bottom - f.top) * v) / 300;
    const x = f.left + step * i + step * 0.14 + 0.5;
    const w = step * 0.72 - 1;
    const y = f.bottom - h;
    return (
      <g key={i}>
        <rect x={x} y={y} width={w} height={h} fill="#2680eb" fillOpacity={fill} />
        <path d={`M${x} ${f.bottom}V${y}H${x + w}V${f.bottom}`} fill="none" stroke="#2680eb" strokeOpacity={edge} />
      </g>
    );
  };
  return (
    <svg viewBox="0 0 1078 405" className={chartText} role="img" aria-label="浏览量">
      <Axes {...f} />
      {views.map((v, i) => bar(v, i, 0.37, 0.45))}
      {visitors.map((v, i) => bar(v, i, 0.55, 0.55))}
    </svg>
  );
}

function EventsChart() {
  const f: Frame = { left: 30, right: 683, top: 12, bottom: 343, ticks: [0, 5, 10, 15, 20, 25] };
  const step = (f.right - f.left) / 24;
  const unit = (f.bottom - f.top) / 25;
  return (
    <svg viewBox="0 0 698 374" className={chartText} role="img" aria-label="用户行为">
      <Axes {...f} />
      {eventBars.map((counts, i) => {
        let base = 0;
        return counts.map((c, s) => {
          if (!c) return null;
          base += c;
          return (
            <rect key={`${i}-${s}`} x={f.left + step * (i + 0.14) + 0.5} y={f.bottom - base * unit} width={step * 0.72 - 1}
              height={c * unit} fill={series[s][1]} fillOpacity="0.56" stroke={series[s][1]} strokeOpacity="0.6" />
          );
        });
      })}
    </svg>
  );
}

function Legend({ items }: { items: [string, string, string?][] }) {
  return (
    <ul className="flex flex-wrap justify-center gap-x-5 text-[12px] leading-[22px]">
      {items.map(([label, color]) => (
        <li key={label} className="flex items-center gap-[10px]">
          <span className="size-[10px] rounded-full opacity-80" style={{ background: color }} />
          {label}
        </li>
      ))}
    </ul>
  );
}

/* ---------- icons ---------- */

function Logo({ className, color }: { className: string; color: string }) {
  return (
    <svg viewBox="0 0 24 24" className={className} aria-hidden="true">
      <path d="M2.5 9.5a9.7 9.7 0 0 1 19 0" fill="none" stroke={color} strokeWidth="1.2" />
      <path d="M0 9.2c0-.6.4-.9.9-.9h22.2c.5 0 .9.3.9.9v1.6a12 12 0 0 1-24 0z" fill={color} />
    </svg>
  );
}

function Sun() {
  const rays = [0, 45, 90, 135, 180, 225, 270, 315];
  return (
    <svg viewBox="0 0 16 16" className="size-4" aria-hidden="true">
      <circle cx="8" cy="8" r="3.5" fill={INK} />
      {rays.map((a) => (
        <path key={a} d="M8 .7v2" stroke={INK} strokeWidth="1.3" strokeLinecap="round" transform={`rotate(${a} 8 8)`} />
      ))}
    </svg>
  );
}

function Globe() {
  return (
    <svg viewBox="0 0 16 16" className="size-4" fill="none" stroke={INK} strokeWidth="1" aria-hidden="true">
      <circle cx="8" cy="8" r="7.3" />
      <ellipse cx="8" cy="8" rx="3.6" ry="7.3" />
      <path d="M8 .7v14.6M1.3 5.5h13.4M1.3 10.5h13.4" />
    </svg>
  );
}

function Refresh() {
  return (
    <svg viewBox="0 0 12 12" className="size-3" fill="none" stroke={INK} strokeWidth="1.1" aria-hidden="true">
      <path d="M10.9 7.2A5 5 0 1 1 9.8 2.5l1.1 1.2M11.2.6v3.4H7.8" />
    </svg>
  );
}

function Arrow() {
  return (
    <svg viewBox="0 0 12 12" className="size-3" fill="none" stroke={INK} aria-hidden="true">
      <path d="M.5 6h10.6M6.6 1.2 11.3 6l-4.7 4.8" />
    </svg>
  );
}

function ListIcon() {
  return (
    <svg viewBox="0 0 12 12" className="size-3" stroke="#555" strokeWidth="1.2" aria-hidden="true">
      <path d="M4 1.5h8M4 4.5h8M4 7.5h8M4 10.5h8M.5 1.5H2M.5 4.5H2M.5 7.5H2M.5 10.5H2" />
    </svg>
  );
}

/* ---------- sections ---------- */

type TableProps = { title: string; metric: string; rows: Row[]; className?: string; clipThird?: boolean };

function MetricsTable({ title, metric, rows, className = "", clipThird }: TableProps) {
  return (
    <div className={`flex flex-col pt-5 ${className}`}>
      <table className="block w-full">
        <thead className="block">
          <tr className="flex h-10 items-center">
            <th scope="col" className="grow text-left text-[16px] font-semibold">{title}</th>
            <th scope="col" className="w-[100px] text-center text-[14px] font-semibold">{metric}</th>
          </tr>
        </thead>
        <tbody className="block text-[14px] leading-[30px]">
          {rows.map(([label, value, pct], i) => (
            <tr key={label} className={clipThird && i === 2 ? "mb-1 flex h-[21px] overflow-hidden" : "mb-[5px] flex h-[30px]"}>
              <td className="grow">{label}</td>
              <td className="w-[50px] pr-[10px] text-right font-semibold">{value}</td>
              <td className="relative w-[50px] border-l border-[#a3a3a3] pl-[10px] text-[#8e8e8e]">
                <span className="absolute inset-y-0 left-0 bg-[#2680eb]/10" style={{ width: `${pct}%` }} />
                {pct}%
              </td>
            </tr>
          ))}
        </tbody>
      </table>
      <div className="mt-auto flex justify-center pt-3 pb-[21px]">
        <a href="#" className="flex h-[26px] items-center gap-[10px] text-[14px]">更多 <Arrow /></a>
      </div>
    </div>
  );
}

export default function App() {
  return (
    <div className="min-h-screen bg-linear-to-r from-[#2bc0e4] to-[#eaecc6] px-24 pt-24 pb-[104px] text-[#2c2c2c] font-['Inter','Noto_Sans_CJK_SC',sans-serif]">
      <div className="rounded-[58px] bg-[#fafafa] pr-1 shadow-[0_2px_6px_rgba(0,0,0,0.35)]">
        <div className="mx-auto max-w-[1138px]">
          <header className="flex h-[100px] items-center justify-between">
            <a href="#" className="flex items-center gap-3 text-[24px]">
              <Logo className="size-6" color={INK} />
              umami
            </a>
            <div className="flex gap-[34px] pr-[18px]">
              <button type="button" aria-label="主题"><Sun /></button>
              <button type="button" aria-label="语言"><Globe /></button>
            </div>
          </header>

          <main className="bg-white px-[30px]">
            <div className="grid h-20 grid-cols-3 items-center">
              <h1 className="flex items-center gap-2 text-[24px] font-semibold">
                <Logo className="size-4" color="#000" />
                umami.is
              </h1>
              <p className="flex items-center justify-center gap-[10px] text-[16px] font-medium">
                <span className="size-[10px] rounded-full bg-[#2d9d78]" />
                当前在线 11 人
              </p>
              <button type="button" aria-label="刷新" className="flex h-7 w-11 items-center justify-center justify-self-end rounded bg-[#f5f5f5]">
                <Refresh />
              </button>
            </div>

            <div className="flex items-center justify-between pt-4 pb-3">
              <dl className="flex">
                {metrics.map(([value, label, change]) => (
                  <div key={label} className="flex min-w-[140px] flex-col-reverse gap-[2px] first:min-w-[160px]">
                    <dt className="flex items-center gap-[10px] text-[16px] leading-6 whitespace-nowrap">
                      {label}
                      <span className="rounded-[5px] border border-[#e5e5e5] px-[5px] text-[12px] leading-[22px] text-[#268e6c]">{change}</span>
                    </dt>
                    <dd className="text-[36px] leading-10 font-semibold">{value}</dd>
                  </div>
                ))}
              </dl>
              <div className="relative">
                <select aria-label="日期范围" className="h-9 w-[161px] appearance-none rounded border border-[#b3b3b3] bg-white pl-4 text-[14px]">
                  <option>最近 24 小时</option>
                </select>
                <svg viewBox="0 0 12 12" className="pointer-events-none absolute top-3 right-4 size-3" fill="none" stroke={INK} aria-hidden="true">
                  <path d="m.8 3.2 5.2 5.4 5.2-5.4" />
                </svg>
              </div>
            </div>

            <TrafficChart />
            <div className="pt-[9px] pb-[30px]">
              <Legend items={[["独立访客", "#2680eb"], ["页面浏览量", "#6aa5f1"]]} />
            </div>

            <section className="grid grid-cols-2 border-t border-[#e3e3e3]">
              <MetricsTable title="网页" metric="浏览量" rows={pages} clipThird className="border-r border-[#e3e3e3] pr-5" />
              <MetricsTable title="来源域名" metric="浏览量" rows={referrers} clipThird className="pl-5" />
            </section>

            <section className="grid grid-cols-3 border-t border-[#e3e3e3]">
              <MetricsTable title="浏览器" metric="访客" rows={browsers} className="border-r border-[#e3e3e3] pr-5" />
              <MetricsTable title="操作系统" metric="访客" rows={systems} className="border-r border-[#e3e3e3] px-5" />
              <MetricsTable title="设备" metric="访客" rows={devices} className="pl-5" />
            </section>

            <section className="grid min-h-[572px] grid-cols-3 border-t border-[#e3e3e3]">
              <div className="col-span-2 border-r border-[#e3e3e3] pt-5">
                <WorldMap />
              </div>
              <MetricsTable title="国家/地区" metric="访客" rows={countries} className="pl-5" />
            </section>

            <section className="grid min-h-[526px] grid-cols-3 border-t border-[#e3e3e3]">
              <MetricsTable title="行为类别" metric="用户行为" rows={events} className="border-r border-[#e3e3e3] pr-5" />
              <div className="col-span-2 pt-5 pl-5">
                <button type="button" className="flex h-8 items-center gap-[10px] rounded bg-[#f5f5f5] px-4 text-[14px]">
                  <ListIcon />
                  Event Data
                </button>
                <div className="pt-[25px]">
                  <EventsChart />
                </div>
                <div className="pt-[10px]">
                  <Legend items={series} />
                </div>
              </div>
            </section>
          </main>

          <footer className="grid h-[86px] grid-cols-3 items-center text-[14px]">
            <span />
            <p className="text-center">由 <a href="#" className="font-semibold">umami</a> 提供支持</p>
            <a href="#" className="mr-[10px] justify-self-end">v1.40.0</a>
          </footer>
        </div>
      </div>
    </div>
  );
}
